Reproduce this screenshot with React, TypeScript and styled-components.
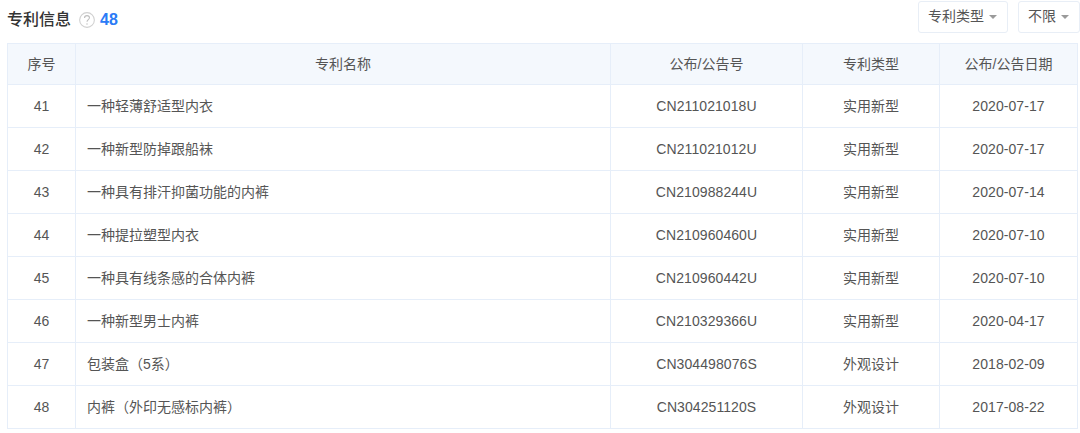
import React from "react";
import styled, { createGlobalStyle } from "styled-components";

const Global = createGlobalStyle`
  html, body { margin: 0; padding: 0; background: #fff; }
  body { font-family: "Liberation Sans", "Noto Sans CJK SC", Arial, sans-serif; color: #555; overflow: hidden; }
`;
const Page = styled.div`
  width: 1080px; height: 433px; padding: 0 0 0 7px; box-sizing: border-box; overflow: hidden;
`;
const Head = styled.div`
  display: flex; align-items: flex-start; height: 43px; box-sizing: border-box;
`;
const TitleGroup = styled.div`
  display: flex; align-items: center; height: 40px;
`;
const Title = styled.span`
  font-size: 16px; font-weight: 500; color: #333; line-height: 20px;
`;
const Help = styled.svg`
  width: 16px; height: 16px; margin-left: 8px; display: block;
`;
const Count = styled.span`
  font-size: 16px; font-weight: 700; color: #2b7bf6; margin-left: 5px; line-height: 20px;
`;
const Filters = styled.div`
  margin-left: auto; display: flex; gap: 10px; padding-top: 1px;
`;
const Filter = styled.div`
  display: flex; align-items: center; height: 32px; box-sizing: border-box; padding: 0 10px 4px 9px;
  border: 1px solid #e8eef6; border-radius: 3px; font-size: 14px; color: #555; background: #fff;
  gap: 5px;
`;
const Caret = styled.i`
  width: 0; height: 0; border-left: 4px solid transparent; border-right: 4px solid transparent;
  border-top: 4px solid #9a9a9a; display: block; margin-top: 4px;
`;
const Table = styled.table`
  border-collapse: collapse; table-layout: fixed; width: 1071px; font-size: 14px;
`;
const Th = styled.th`
  height: 41px; padding: 0 0 2px; box-sizing: border-box; background: #f4f8fd; border: 1px solid #e6eef9;
  font-weight: 400; color: #555; text-align: center;
`;
const Cell = styled.td`
  height: 43px; box-sizing: border-box; border: 1px solid #e6eef9; color: #555;
  padding: 0 0 1px; text-align: center;
`;
const CodeCell = styled(Cell)`
  letter-spacing: 0.08px;
`;
const TextCell = styled(Cell)`
  padding-bottom: 2px;
`;
const NameCell = styled(TextCell)`
  padding-left: 11px; padding-right: 11px; text-align: left;
`;

const rows = [
  ["41", "一种轻薄舒适型内衣", "CN211021018U", "实用新型", "2020-07-17"],
  ["42", "一种新型防掉跟船袜", "CN211021012U", "实用新型", "2020-07-17"],
  ["43", "一种具有排汗抑菌功能的内裤", "CN210988244U", "实用新型", "2020-07-14"],
  ["44", "一种提拉塑型内衣", "CN210960460U", "实用新型", "2020-07-10"],
  ["45", "一种具有线条感的合体内裤", "CN210960442U", "实用新型", "2020-07-10"],
  ["46", "一种新型男士内裤", "CN210329366U", "实用新型", "2020-04-17"],
  ["47", "包装盒（5系）", "CN304498076S", "外观设计", "2018-02-09"],
  ["48", "内裤（外印无感标内裤）", "CN304251120S", "外观设计", "2017-08-22"],
];

export default function App() {
  return (
    <Page>
      <Global />
      <Head>
        <TitleGroup>
          <Title>专利信息</Title>
          <Help viewBox="0 0 15 15">
            <circle cx="7.5" cy="7.5" r="6.9" fill="none" stroke="#d0d0d0" />
            <path d="M5.2 5.6c0-1.4 1-2.2 2.3-2.2s2.3.8 2.3 2c0 1.7-2.3 1.8-2.3 3.8" fill="none" stroke="#bdbdbd" />
            <circle cx="7.5" cy="11.3" r=".65" fill="#bdbdbd" />
          </Help>
          <Count>48</Count>
        </TitleGroup>
        <Filters>
          <Filter>专利类型<Caret /></Filter>
          <Filter>不限<Caret /></Filter>
        </Filters>
      </Head>
      <Table>
        <colgroup>
          <col style={{ width: 68 }} />
          <col style={{ width: 535 }} />
          <col style={{ width: 192 }} />
          <col style={{ width: 137 }} />
          <col style={{ width: 138 }} />
        </colgroup>
        <thead>
          <tr>
            <Th>序号</Th><Th>专利名称</Th><Th>公布/公告号</Th><Th>专利类型</Th><Th>公布/公告日期</Th>
          </tr>
        </thead>
        <tbody>
          {rows.map((r) => (
            <tr key={r[0]}>
              <Cell>{r[0]}</Cell>
              <NameCell>{r[1]}</NameCell>
              <CodeCell>{r[2]}</CodeCell>
              <TextCell>{r[3]}</TextCell>
              <CodeCell>{r[4]}</CodeCell>
            </tr>
          ))}
        </tbody>
      </Table>
    </Page>
  );
}
